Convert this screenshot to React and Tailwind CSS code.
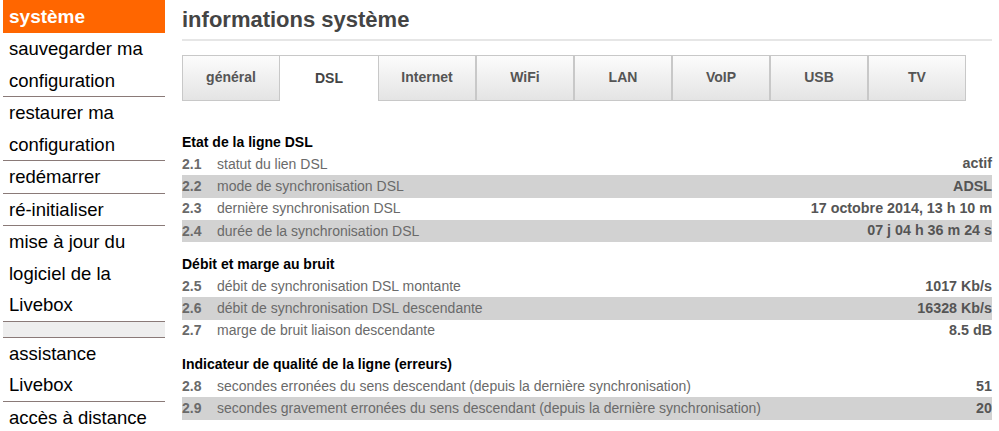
import React from "react";

const menu = [
  { label: ["système"], active: true },
  { label: ["sauvegarder ma", "configuration"] },
  { label: ["restaurer ma", "configuration"] },
  { label: ["redémarrer"] },
  { label: ["ré-initialiser"] },
  { label: ["mise à jour du", "logiciel de la", "Livebox"] },
  { spacer: true },
  { label: ["assistance", "Livebox"] },
  { label: ["accès à distance"] },
];

const tabs = ["général", "DSL", "Internet", "WiFi", "LAN", "VoIP", "USB", "TV"];

const sections = [
  {
    title: "Etat de la ligne DSL",
    rows: [
      ["2.1", "statut du lien DSL", "actif"],
      ["2.2", "mode de synchronisation DSL", "ADSL"],
      ["2.3", "dernière synchronisation DSL", "17 octobre 2014, 13 h 10 m"],
      ["2.4", "durée de la synchronisation DSL", "07 j 04 h 36 m 24 s"],
    ],
  },
  {
    title: "Débit et marge au bruit",
    rows: [
      ["2.5", "débit de synchronisation DSL montante", "1017 Kb/s"],
      ["2.6", "débit de synchronisation DSL descendante", "16328 Kb/s"],
      ["2.7", "marge de bruit liaison descendante", "8.5 dB"],
    ],
  },
  {
    title: "Indicateur de qualité de la ligne (erreurs)",
    rows: [
      ["2.8", "secondes erronées du sens descendant (depuis la dernière synchronisation)", "51"],
      ["2.9", "secondes gravement erronées du sens descendant (depuis la dernière synchronisation)", "20"],
    ],
  },
];

const Sidebar = () => (
  <aside className="w-[162px] ml-[3px] shrink-0">
    {menu.map((item, i) =>
      item.spacer ? (
        <div key={i} className="h-[16px] bg-[#eeeeee] border-b border-[#8a7a78]" />
      ) : item.active ? (
        <div key={i} className="h-[33px] leading-[33px] bg-[#ff6600] text-white font-bold text-[19px] px-[6px]">
          {item.label[0]}
        </div>
      ) : (
        <div key={i} className="border-b border-[#8a7a78] px-[6px] text-[18.5px] leading-[31.5px] text-black">
          {item.label.map((l, j) => (
            <div key={j}>{l}</div>
          ))}
        </div>
      )
    )}
  </aside>
);

const Tabs = () => (
  <div className="flex mt-[14px]">
    {tabs.map((t, i) =>
      t === "DSL" ? (
        <div key={i} className="w-[98px] h-[46px] border-t border-[#c8c8c8] bg-white text-center pt-[12px] text-[14px] font-bold text-[#444]">
          {t}
        </div>
      ) : (
        <div key={i} className="w-[98px] h-[46px] border border-[#c8c8c8] bg-gradient-to-b from-[#fcfcfc] to-[#e4e4e4] text-center pt-[11px] text-[14px] font-bold text-[#555]">
          {t}
        </div>
      )
    )}
  </div>
);

const Section = ({ title, rows, first }) => (
  <div className={first ? "mt-[30px]" : "mt-[11px]"}>
    <div className="h-[22px] leading-[22px] text-[14px] font-bold text-black">{title}</div>
    {rows.map(([n, label, value], i) => (
      <div
        key={n}
        className={`flex items-center h-[22.3px] text-[#6a6a6a] ${i % 2 === 1 ? "bg-[#d2d2d2]" : ""}`}
      >
        <span className="w-[35px] text-[14px] font-bold">{n}</span>
        <span className="flex-1 text-[14px]">{label}</span>
        <span className="text-[14.3px] font-bold text-[#555]">{value}</span>
      </div>
    ))}
  </div>
);

export default function App() {
  return (
    <div className="flex w-[999px] h-[431px] overflow-hidden bg-white font-['Liberation_Sans',Arial,sans-serif]">
      <Sidebar />
      <main className="ml-[17px] w-[810px]">
        <h1 className="pt-[7px] h-[41px] text-[22px] leading-[26px] font-bold text-[#444] border-b-2 border-[#e6e6e6]">
          informations système
        </h1>
        <Tabs />
        {sections.map((s, i) => (
          <Section key={i} first={i === 0} {...s} />
        ))}
      </main>
    </div>
  );
}
